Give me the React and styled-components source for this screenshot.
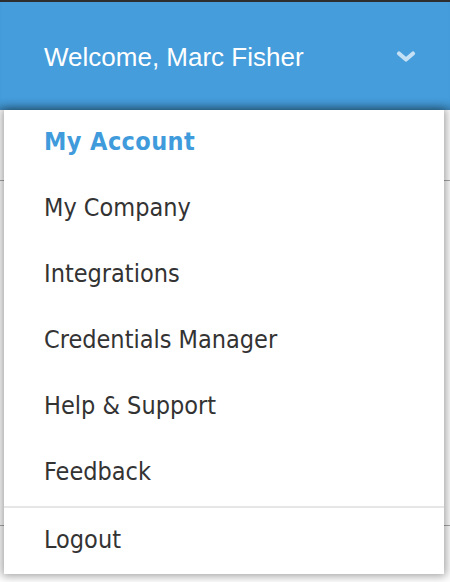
import React from 'react';
import styled, { createGlobalStyle } from 'styled-components';

const GlobalStyle = createGlobalStyle`
  html, body {
    margin: 0;
    padding: 0;
    background: #fff;
  }
  body {
    width: 450px;
    height: 582px;
    overflow: hidden;
  }
`;

const Page = styled.div`
  position: relative;
  width: 450px;
  height: 582px;
  background: #fff;
  border-top: 2px solid #2e2e2e;
  box-sizing: border-box;
`;

const Header = styled.div`
  height: 108px;
  background: #459ddb;
  box-shadow: inset 0 -10px 10px -8px rgba(0, 0, 0, 0.25);
  display: flex;
  align-items: center;
  justify-content: space-between;
  padding: 0 34px 0 44px;
  box-sizing: border-box;
`;

const Welcome = styled.span`
  font-family: "Liberation Sans", Arial, sans-serif;
  font-size: 26px;
  color: #fff;
  margin-top: 2px;
`;

const Chevron = styled.svg`
  width: 20px;
  height: 14px;
  margin-top: 2px;
`;

const Row = styled.div`
  height: ${p => p.h}px;
  border-bottom: 1px solid #a9a9a9;
`;

const Menu = styled.div`
  position: absolute;
  top: 108px;
  left: 4px;
  width: 440px;
  background: #fff;
  box-shadow: 0 0 9px 2px rgba(0, 0, 0, 0.38);
  display: flex;
  flex-direction: column;
`;

const Item = styled.div`
  height: 66px;
  display: flex;
  align-items: center;
  padding: 0 0 4px 40px;
  box-sizing: border-box;
  font-family: "DejaVu Sans Condensed", "DejaVu Sans", Tahoma, sans-serif;
  font-size: 25px;
  font-weight: ${p => (p.active ? 700 : 400)};
  color: ${p => (p.active ? '#3f9bdb' : '#333')};
  letter-spacing: ${p => (p.active ? '0.4px' : '0')};
  cursor: pointer;
`;

const Divider = styled.div`
  height: 2px;
  background: #e6e6e6;
`;

const items = ['My Account', 'My Company', 'Integrations', 'Credentials Manager', 'Help & Support', 'Feedback'];

export default function App() {
  return (
    <>
      <GlobalStyle />
      <Page>
        <Header>
          <Welcome>Welcome, Marc Fisher</Welcome>
          <Chevron viewBox="0 0 20 14">
            <path d="M3 3.5 L10 9.5 L17 3.5" fill="none" stroke="#c4e0f5" strokeWidth="4.2" strokeLinecap="round" strokeLinejoin="round" />
          </Chevron>
        </Header>
        <Row h={70} />
        <Row h={344} />
        <Menu>
          {items.map((label, i) => (
            <Item key={label} active={i === 0}>{label}</Item>
          ))}
          <Divider />
          <Item>Logout</Item>
        </Menu>
      </Page>
    </>
  );
}
